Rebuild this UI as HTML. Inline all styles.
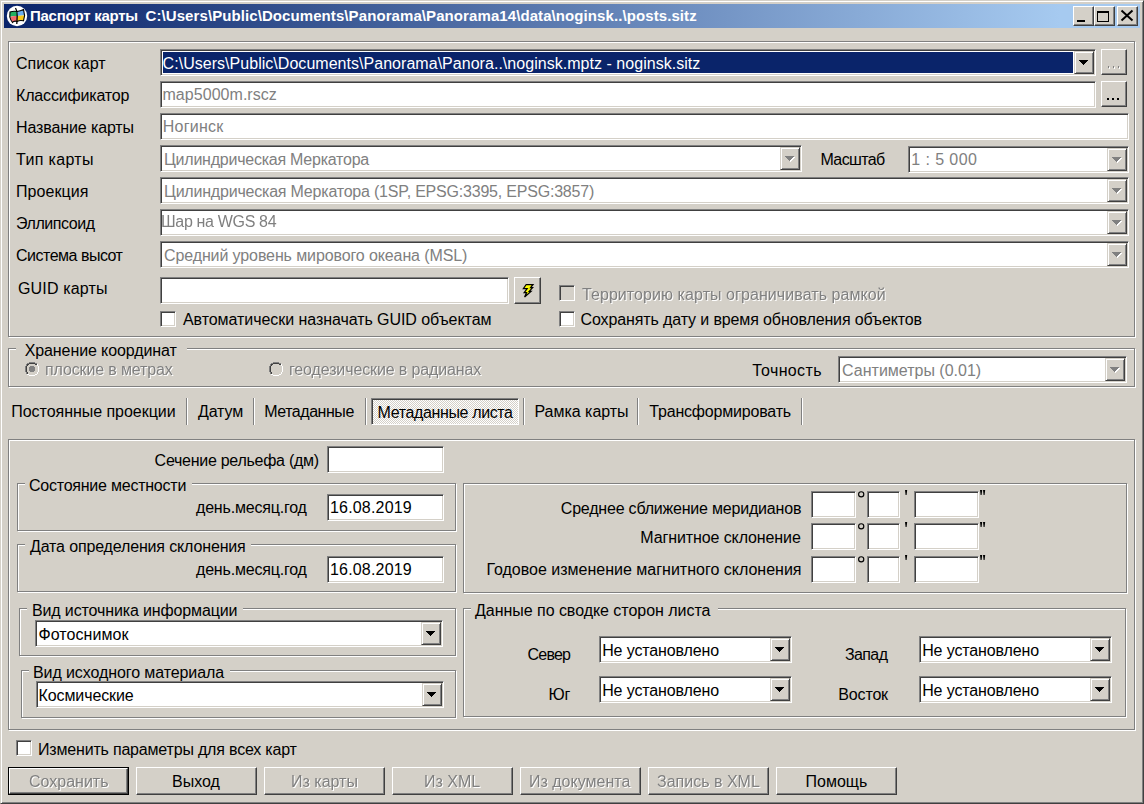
<!DOCTYPE html>
<html><head><meta charset="utf-8"><style>
html,body{margin:0;padding:0}
body{width:1144px;height:804px;background:#d4d0c8;position:relative;overflow:hidden;font-family:"Liberation Sans",sans-serif;font-size:16px;color:#000}
.a{position:absolute;box-sizing:border-box}
.t{position:absolute;white-space:pre;line-height:18px;font-size:16px}
.dis{color:#808080;text-shadow:1px 1px 0 #fff;will-change:transform}
.g{color:#808080}
.w{color:#fff}
.sk{position:absolute;box-sizing:border-box;background:#fff;border:1px solid;border-color:#808080 #fff #fff #808080;box-shadow:inset 1px 1px #404040,inset -1px -1px #d4d0c8}
.bt{position:absolute;box-sizing:border-box;background:#d4d0c8;border:1px solid;border-color:#fff #404040 #404040 #fff;box-shadow:inset -1px -1px #808080}
.dd{position:absolute;box-sizing:border-box;background:#d4d0c8;border:1px solid;border-color:#d4d0c8 #404040 #404040 #d4d0c8;box-shadow:inset 1px 1px #fff,inset -1px -1px #808080}
.gb{position:absolute;box-sizing:border-box;border:1px solid #808080;box-shadow:1px 1px 0 0 #fff,inset 1px 1px 0 0 #fff}
svg.a{overflow:visible}
</style></head><body>
<div class="a" style="left:0;top:0;width:1144px;height:804px;border:1px solid;border-color:#d4d0c8 #404040 #404040 #d4d0c8;box-shadow:inset 1px 1px #fff,inset -1px -1px #808080"></div>
<div class="a" style="left:4px;top:4px;width:1136px;height:24px;background:linear-gradient(to right,#0a246a 0,#a6caf0 1056px,#a6caf0 100%)"></div>
<svg class="a" style="left:6px;top:5px" width="22" height="22" viewBox="0 0 22 22">
<circle cx="11" cy="11" r="10.2" fill="#fff"/>
<path d="M4 7 Q7.5 5.8 11 6.5 L11 11 Q7 10.6 3.8 12 Z" fill="#22b060"/>
<path d="M11 6.5 Q14.5 6 17.5 4.5 L18.6 10.6 Q14.5 10.3 11 11 Z" fill="#6aaef0"/>
<path d="M3.8 12 Q7 10.6 11 11 L11 16.5 Q8 15.5 6.5 17.5 Z" fill="#f06a6a"/>
<path d="M11 11 Q14.5 10.3 18.6 10.6 L17.5 15.8 Q14 14.8 11 16.5 Z" fill="#f8c818"/>
<path d="M4 7 Q7.5 5.8 11 6.5 Q14.5 6 17.5 4.5 L18.6 10.6 L17.5 15.8 Q14 14.8 11 16.5 Q8 15.5 6.5 17.5 Q4.5 15 3.8 12 Z" fill="none" stroke="#000" stroke-width="1.1"/>
<path d="M9.5 3 Q11.5 6 11.2 11 Q11 16 10.8 19" fill="none" stroke="#000" stroke-width="1.3"/>
</svg>
<div class="bt" style="left:1073px;top:6px;width:21px;height:20px;"></div>
<div class="bt" style="left:1094px;top:6px;width:21px;height:20px;"></div>
<div class="bt" style="left:1117px;top:6px;width:21px;height:20px;"></div>
<div class="a" style="left:1077px;top:20px;width:8px;height:2px;background:#000"></div>
<div class="a" style="left:1097px;top:11px;width:12px;height:11px;border:1px solid #000;border-top-width:2px"></div>
<svg class="a" style="left:1117px;top:6px" width="21" height="20"><path d="M4.5 4.5 L15.5 14.5 M15.5 4.5 L4.5 14.5" stroke="#000" stroke-width="2" fill="none"/></svg>
<div class="gb" style="left:8px;top:41px;width:1127px;height:296px;"></div>
<div class="sk" style="left:160px;top:49px;width:936px;height:27px;background:#fff"></div>
<div class="dd" style="left:1074px;top:51px;width:20px;height:23px;"></div>
<svg class="a" style="left:1079px;top:60px" width="9" height="5" shape-rendering="crispEdges"><rect x="0" y="0" width="9" height="1" fill="#000"/><rect x="1" y="1" width="7" height="1" fill="#000"/><rect x="2" y="2" width="5" height="1" fill="#000"/><rect x="3" y="3" width="3" height="1" fill="#000"/><rect x="4" y="4" width="1" height="1" fill="#000"/></svg>
<div class="a" style="left:163px;top:52px;width:910px;height:21px;background:#0a246a"></div>
<div class="bt" style="left:1101px;top:49px;width:26px;height:26px;"></div>
<div class="a" style="left:1109px;top:67px;width:1px;height:2px;background:#fff"></div><div class="a" style="left:1108px;top:66px;width:1px;height:2px;background:#808080"></div>
<div class="a" style="left:1114px;top:67px;width:1px;height:2px;background:#fff"></div><div class="a" style="left:1113px;top:66px;width:1px;height:2px;background:#808080"></div>
<div class="a" style="left:1119px;top:67px;width:1px;height:2px;background:#fff"></div><div class="a" style="left:1118px;top:66px;width:1px;height:2px;background:#808080"></div>
<div class="sk" style="left:160px;top:81px;width:936px;height:27px;background:#fff"></div>
<div class="bt" style="left:1101px;top:81px;width:26px;height:26px;"></div>
<div class="a" style="left:1107px;top:98px;width:2px;height:2px;background:#000"></div>
<div class="a" style="left:1112px;top:98px;width:2px;height:2px;background:#000"></div>
<div class="a" style="left:1117px;top:98px;width:2px;height:2px;background:#000"></div>
<div class="sk" style="left:160px;top:113px;width:969px;height:27px;background:#fff"></div>
<div class="sk" style="left:160px;top:145px;width:642px;height:27px;background:#fff"></div>
<div class="dd" style="left:780px;top:147px;width:20px;height:23px;"></div>
<svg class="a" style="left:785px;top:156px" width="11" height="7" shape-rendering="crispEdges"><rect x="1" y="1" width="9" height="1" fill="#fff"/><rect x="2" y="2" width="7" height="1" fill="#fff"/><rect x="3" y="3" width="5" height="1" fill="#fff"/><rect x="4" y="4" width="3" height="1" fill="#fff"/><rect x="5" y="5" width="1" height="1" fill="#fff"/><rect x="0" y="0" width="9" height="1" fill="#808080"/><rect x="1" y="1" width="7" height="1" fill="#808080"/><rect x="2" y="2" width="5" height="1" fill="#808080"/><rect x="3" y="3" width="3" height="1" fill="#808080"/><rect x="4" y="4" width="1" height="1" fill="#808080"/></svg>
<div class="sk" style="left:908px;top:146px;width:221px;height:27px;background:#fff"></div>
<div class="dd" style="left:1107px;top:148px;width:20px;height:23px;"></div>
<svg class="a" style="left:1112px;top:157px" width="11" height="7" shape-rendering="crispEdges"><rect x="1" y="1" width="9" height="1" fill="#fff"/><rect x="2" y="2" width="7" height="1" fill="#fff"/><rect x="3" y="3" width="5" height="1" fill="#fff"/><rect x="4" y="4" width="3" height="1" fill="#fff"/><rect x="5" y="5" width="1" height="1" fill="#fff"/><rect x="0" y="0" width="9" height="1" fill="#808080"/><rect x="1" y="1" width="7" height="1" fill="#808080"/><rect x="2" y="2" width="5" height="1" fill="#808080"/><rect x="3" y="3" width="3" height="1" fill="#808080"/><rect x="4" y="4" width="1" height="1" fill="#808080"/></svg>
<div class="sk" style="left:160px;top:177px;width:969px;height:27px;background:#fff"></div>
<div class="dd" style="left:1107px;top:179px;width:20px;height:23px;"></div>
<svg class="a" style="left:1112px;top:188px" width="11" height="7" shape-rendering="crispEdges"><rect x="1" y="1" width="9" height="1" fill="#fff"/><rect x="2" y="2" width="7" height="1" fill="#fff"/><rect x="3" y="3" width="5" height="1" fill="#fff"/><rect x="4" y="4" width="3" height="1" fill="#fff"/><rect x="5" y="5" width="1" height="1" fill="#fff"/><rect x="0" y="0" width="9" height="1" fill="#808080"/><rect x="1" y="1" width="7" height="1" fill="#808080"/><rect x="2" y="2" width="5" height="1" fill="#808080"/><rect x="3" y="3" width="3" height="1" fill="#808080"/><rect x="4" y="4" width="1" height="1" fill="#808080"/></svg>
<div class="sk" style="left:160px;top:209px;width:969px;height:27px;background:#fff"></div>
<div class="dd" style="left:1107px;top:211px;width:20px;height:23px;"></div>
<svg class="a" style="left:1112px;top:220px" width="11" height="7" shape-rendering="crispEdges"><rect x="1" y="1" width="9" height="1" fill="#fff"/><rect x="2" y="2" width="7" height="1" fill="#fff"/><rect x="3" y="3" width="5" height="1" fill="#fff"/><rect x="4" y="4" width="3" height="1" fill="#fff"/><rect x="5" y="5" width="1" height="1" fill="#fff"/><rect x="0" y="0" width="9" height="1" fill="#808080"/><rect x="1" y="1" width="7" height="1" fill="#808080"/><rect x="2" y="2" width="5" height="1" fill="#808080"/><rect x="3" y="3" width="3" height="1" fill="#808080"/><rect x="4" y="4" width="1" height="1" fill="#808080"/></svg>
<div class="sk" style="left:160px;top:241px;width:969px;height:27px;background:#fff"></div>
<div class="dd" style="left:1107px;top:243px;width:20px;height:23px;"></div>
<svg class="a" style="left:1112px;top:252px" width="11" height="7" shape-rendering="crispEdges"><rect x="1" y="1" width="9" height="1" fill="#fff"/><rect x="2" y="2" width="7" height="1" fill="#fff"/><rect x="3" y="3" width="5" height="1" fill="#fff"/><rect x="4" y="4" width="3" height="1" fill="#fff"/><rect x="5" y="5" width="1" height="1" fill="#fff"/><rect x="0" y="0" width="9" height="1" fill="#808080"/><rect x="1" y="1" width="7" height="1" fill="#808080"/><rect x="2" y="2" width="5" height="1" fill="#808080"/><rect x="3" y="3" width="3" height="1" fill="#808080"/><rect x="4" y="4" width="1" height="1" fill="#808080"/></svg>
<div class="sk" style="left:160px;top:277px;width:349px;height:27px;background:#fff"></div>
<div class="bt" style="left:514px;top:277px;width:27px;height:27px;"></div>
<svg class="a" style="left:520px;top:282px" width="16" height="16" viewBox="0 0 16 16">
<path d="M6.2 2.5 L13 2.5 L10.6 5.6 L12.6 5.6 L9.2 9.4 L11 9.4 L4.6 15 L6.6 10.6 L4.2 10.6 L7.2 6.6 L3.4 6.6 Z" fill="#ffff00" stroke="#000" stroke-width="1.25" stroke-linejoin="miter"/>
</svg>
<div class="sk" style="left:559px;top:285px;width:16px;height:16px;background:#d4d0c8"></div>
<div class="sk" style="left:160px;top:311px;width:16px;height:16px;background:#fff"></div>
<div class="sk" style="left:559px;top:311px;width:16px;height:16px;background:#fff"></div>
<div class="gb" style="left:8px;top:348px;width:1127px;height:39px;"></div>
<div class="a" style="left:16px;top:345px;width:171px;height:6px;background:#d4d0c8"></div>
<svg class="a" style="left:25px;top:362px" width="14" height="14" shape-rendering="crispEdges"><rect x="4" y="2" width="6" height="1" fill="#d4d0c8"/><rect x="3" y="3" width="8" height="1" fill="#d4d0c8"/><rect x="2" y="4" width="10" height="1" fill="#d4d0c8"/><rect x="2" y="5" width="10" height="1" fill="#d4d0c8"/><rect x="2" y="6" width="10" height="1" fill="#d4d0c8"/><rect x="2" y="7" width="10" height="1" fill="#d4d0c8"/><rect x="2" y="8" width="10" height="1" fill="#d4d0c8"/><rect x="2" y="9" width="10" height="1" fill="#d4d0c8"/><rect x="3" y="10" width="8" height="1" fill="#d4d0c8"/><rect x="4" y="11" width="6" height="1" fill="#d4d0c8"/><rect x="4" y="0" width="1" height="1" fill="#808080"/><rect x="5" y="0" width="1" height="1" fill="#808080"/><rect x="6" y="0" width="1" height="1" fill="#808080"/><rect x="7" y="0" width="1" height="1" fill="#808080"/><rect x="8" y="0" width="1" height="1" fill="#808080"/><rect x="9" y="0" width="1" height="1" fill="#808080"/><rect x="2" y="1" width="1" height="1" fill="#808080"/><rect x="3" y="1" width="1" height="1" fill="#808080"/><rect x="10" y="1" width="1" height="1" fill="#808080"/><rect x="11" y="1" width="1" height="1" fill="#808080"/><rect x="1" y="2" width="1" height="1" fill="#808080"/><rect x="12" y="2" width="1" height="1" fill="#fff"/><rect x="1" y="3" width="1" height="1" fill="#808080"/><rect x="12" y="3" width="1" height="1" fill="#fff"/><rect x="0" y="4" width="1" height="1" fill="#808080"/><rect x="13" y="4" width="1" height="1" fill="#fff"/><rect x="0" y="5" width="1" height="1" fill="#808080"/><rect x="13" y="5" width="1" height="1" fill="#fff"/><rect x="0" y="6" width="1" height="1" fill="#808080"/><rect x="13" y="6" width="1" height="1" fill="#fff"/><rect x="0" y="7" width="1" height="1" fill="#808080"/><rect x="13" y="7" width="1" height="1" fill="#fff"/><rect x="0" y="8" width="1" height="1" fill="#808080"/><rect x="13" y="8" width="1" height="1" fill="#fff"/><rect x="0" y="9" width="1" height="1" fill="#808080"/><rect x="13" y="9" width="1" height="1" fill="#fff"/><rect x="1" y="10" width="1" height="1" fill="#808080"/><rect x="12" y="10" width="1" height="1" fill="#fff"/><rect x="1" y="11" width="1" height="1" fill="#808080"/><rect x="12" y="11" width="1" height="1" fill="#fff"/><rect x="2" y="12" width="1" height="1" fill="#fff"/><rect x="3" y="12" width="1" height="1" fill="#fff"/><rect x="10" y="12" width="1" height="1" fill="#fff"/><rect x="11" y="12" width="1" height="1" fill="#fff"/><rect x="4" y="13" width="1" height="1" fill="#fff"/><rect x="5" y="13" width="1" height="1" fill="#fff"/><rect x="6" y="13" width="1" height="1" fill="#fff"/><rect x="7" y="13" width="1" height="1" fill="#fff"/><rect x="8" y="13" width="1" height="1" fill="#fff"/><rect x="9" y="13" width="1" height="1" fill="#fff"/><rect x="4" y="1" width="1" height="1" fill="#404040"/><rect x="5" y="1" width="1" height="1" fill="#404040"/><rect x="6" y="1" width="1" height="1" fill="#404040"/><rect x="7" y="1" width="1" height="1" fill="#404040"/><rect x="8" y="1" width="1" height="1" fill="#404040"/><rect x="9" y="1" width="1" height="1" fill="#404040"/><rect x="2" y="2" width="1" height="1" fill="#404040"/><rect x="3" y="2" width="1" height="1" fill="#404040"/><rect x="10" y="2" width="1" height="1" fill="#404040"/><rect x="11" y="2" width="1" height="1" fill="#404040"/><rect x="2" y="3" width="1" height="1" fill="#404040"/><rect x="11" y="3" width="1" height="1" fill="#d4d0c8"/><rect x="1" y="4" width="1" height="1" fill="#404040"/><rect x="12" y="4" width="1" height="1" fill="#d4d0c8"/><rect x="1" y="5" width="1" height="1" fill="#404040"/><rect x="12" y="5" width="1" height="1" fill="#d4d0c8"/><rect x="1" y="6" width="1" height="1" fill="#404040"/><rect x="12" y="6" width="1" height="1" fill="#d4d0c8"/><rect x="1" y="7" width="1" height="1" fill="#404040"/><rect x="12" y="7" width="1" height="1" fill="#d4d0c8"/><rect x="1" y="8" width="1" height="1" fill="#404040"/><rect x="12" y="8" width="1" height="1" fill="#d4d0c8"/><rect x="1" y="9" width="1" height="1" fill="#404040"/><rect x="12" y="9" width="1" height="1" fill="#d4d0c8"/><rect x="2" y="10" width="1" height="1" fill="#404040"/><rect x="11" y="10" width="1" height="1" fill="#d4d0c8"/><rect x="2" y="11" width="1" height="1" fill="#404040"/><rect x="3" y="11" width="1" height="1" fill="#d4d0c8"/><rect x="10" y="11" width="1" height="1" fill="#d4d0c8"/><rect x="11" y="11" width="1" height="1" fill="#d4d0c8"/><rect x="4" y="12" width="1" height="1" fill="#d4d0c8"/><rect x="5" y="12" width="1" height="1" fill="#d4d0c8"/><rect x="6" y="12" width="1" height="1" fill="#d4d0c8"/><rect x="7" y="12" width="1" height="1" fill="#d4d0c8"/><rect x="8" y="12" width="1" height="1" fill="#d4d0c8"/><rect x="9" y="12" width="1" height="1" fill="#d4d0c8"/><rect x="5" y="4" width="4" height="6" fill="#808080"/><rect x="4" y="5" width="6" height="4" fill="#808080"/></svg>
<svg class="a" style="left:269px;top:362px" width="14" height="14" shape-rendering="crispEdges"><rect x="4" y="2" width="6" height="1" fill="#d4d0c8"/><rect x="3" y="3" width="8" height="1" fill="#d4d0c8"/><rect x="2" y="4" width="10" height="1" fill="#d4d0c8"/><rect x="2" y="5" width="10" height="1" fill="#d4d0c8"/><rect x="2" y="6" width="10" height="1" fill="#d4d0c8"/><rect x="2" y="7" width="10" height="1" fill="#d4d0c8"/><rect x="2" y="8" width="10" height="1" fill="#d4d0c8"/><rect x="2" y="9" width="10" height="1" fill="#d4d0c8"/><rect x="3" y="10" width="8" height="1" fill="#d4d0c8"/><rect x="4" y="11" width="6" height="1" fill="#d4d0c8"/><rect x="4" y="0" width="1" height="1" fill="#808080"/><rect x="5" y="0" width="1" height="1" fill="#808080"/><rect x="6" y="0" width="1" height="1" fill="#808080"/><rect x="7" y="0" width="1" height="1" fill="#808080"/><rect x="8" y="0" width="1" height="1" fill="#808080"/><rect x="9" y="0" width="1" height="1" fill="#808080"/><rect x="2" y="1" width="1" height="1" fill="#808080"/><rect x="3" y="1" width="1" height="1" fill="#808080"/><rect x="10" y="1" width="1" height="1" fill="#808080"/><rect x="11" y="1" width="1" height="1" fill="#808080"/><rect x="1" y="2" width="1" height="1" fill="#808080"/><rect x="12" y="2" width="1" height="1" fill="#fff"/><rect x="1" y="3" width="1" height="1" fill="#808080"/><rect x="12" y="3" width="1" height="1" fill="#fff"/><rect x="0" y="4" width="1" height="1" fill="#808080"/><rect x="13" y="4" width="1" height="1" fill="#fff"/><rect x="0" y="5" width="1" height="1" fill="#808080"/><rect x="13" y="5" width="1" height="1" fill="#fff"/><rect x="0" y="6" width="1" height="1" fill="#808080"/><rect x="13" y="6" width="1" height="1" fill="#fff"/><rect x="0" y="7" width="1" height="1" fill="#808080"/><rect x="13" y="7" width="1" height="1" fill="#fff"/><rect x="0" y="8" width="1" height="1" fill="#808080"/><rect x="13" y="8" width="1" height="1" fill="#fff"/><rect x="0" y="9" width="1" height="1" fill="#808080"/><rect x="13" y="9" width="1" height="1" fill="#fff"/><rect x="1" y="10" width="1" height="1" fill="#808080"/><rect x="12" y="10" width="1" height="1" fill="#fff"/><rect x="1" y="11" width="1" height="1" fill="#808080"/><rect x="12" y="11" width="1" height="1" fill="#fff"/><rect x="2" y="12" width="1" height="1" fill="#fff"/><rect x="3" y="12" width="1" height="1" fill="#fff"/><rect x="10" y="12" width="1" height="1" fill="#fff"/><rect x="11" y="12" width="1" height="1" fill="#fff"/><rect x="4" y="13" width="1" height="1" fill="#fff"/><rect x="5" y="13" width="1" height="1" fill="#fff"/><rect x="6" y="13" width="1" height="1" fill="#fff"/><rect x="7" y="13" width="1" height="1" fill="#fff"/><rect x="8" y="13" width="1" height="1" fill="#fff"/><rect x="9" y="13" width="1" height="1" fill="#fff"/><rect x="4" y="1" width="1" height="1" fill="#404040"/><rect x="5" y="1" width="1" height="1" fill="#404040"/><rect x="6" y="1" width="1" height="1" fill="#404040"/><rect x="7" y="1" width="1" height="1" fill="#404040"/><rect x="8" y="1" width="1" height="1" fill="#404040"/><rect x="9" y="1" width="1" height="1" fill="#404040"/><rect x="2" y="2" width="1" height="1" fill="#404040"/><rect x="3" y="2" width="1" height="1" fill="#404040"/><rect x="10" y="2" width="1" height="1" fill="#404040"/><rect x="11" y="2" width="1" height="1" fill="#404040"/><rect x="2" y="3" width="1" height="1" fill="#404040"/><rect x="11" y="3" width="1" height="1" fill="#d4d0c8"/><rect x="1" y="4" width="1" height="1" fill="#404040"/><rect x="12" y="4" width="1" height="1" fill="#d4d0c8"/><rect x="1" y="5" width="1" height="1" fill="#404040"/><rect x="12" y="5" width="1" height="1" fill="#d4d0c8"/><rect x="1" y="6" width="1" height="1" fill="#404040"/><rect x="12" y="6" width="1" height="1" fill="#d4d0c8"/><rect x="1" y="7" width="1" height="1" fill="#404040"/><rect x="12" y="7" width="1" height="1" fill="#d4d0c8"/><rect x="1" y="8" width="1" height="1" fill="#404040"/><rect x="12" y="8" width="1" height="1" fill="#d4d0c8"/><rect x="1" y="9" width="1" height="1" fill="#404040"/><rect x="12" y="9" width="1" height="1" fill="#d4d0c8"/><rect x="2" y="10" width="1" height="1" fill="#404040"/><rect x="11" y="10" width="1" height="1" fill="#d4d0c8"/><rect x="2" y="11" width="1" height="1" fill="#404040"/><rect x="3" y="11" width="1" height="1" fill="#d4d0c8"/><rect x="10" y="11" width="1" height="1" fill="#d4d0c8"/><rect x="11" y="11" width="1" height="1" fill="#d4d0c8"/><rect x="4" y="12" width="1" height="1" fill="#d4d0c8"/><rect x="5" y="12" width="1" height="1" fill="#d4d0c8"/><rect x="6" y="12" width="1" height="1" fill="#d4d0c8"/><rect x="7" y="12" width="1" height="1" fill="#d4d0c8"/><rect x="8" y="12" width="1" height="1" fill="#d4d0c8"/><rect x="9" y="12" width="1" height="1" fill="#d4d0c8"/></svg>
<div class="sk" style="left:838px;top:356px;width:289px;height:27px;background:#fff"></div>
<div class="dd" style="left:1105px;top:358px;width:20px;height:23px;"></div>
<svg class="a" style="left:1110px;top:367px" width="11" height="7" shape-rendering="crispEdges"><rect x="1" y="1" width="9" height="1" fill="#fff"/><rect x="2" y="2" width="7" height="1" fill="#fff"/><rect x="3" y="3" width="5" height="1" fill="#fff"/><rect x="4" y="4" width="3" height="1" fill="#fff"/><rect x="5" y="5" width="1" height="1" fill="#fff"/><rect x="0" y="0" width="9" height="1" fill="#808080"/><rect x="1" y="1" width="7" height="1" fill="#808080"/><rect x="2" y="2" width="5" height="1" fill="#808080"/><rect x="3" y="3" width="3" height="1" fill="#808080"/><rect x="4" y="4" width="1" height="1" fill="#808080"/></svg>
<div class="a" style="left:186px;top:398px;width:2px;height:27px;border-left:1px solid #808080;border-right:1px solid #fff"></div>
<div class="a" style="left:253px;top:398px;width:2px;height:27px;border-left:1px solid #808080;border-right:1px solid #fff"></div>
<div class="a" style="left:365px;top:398px;width:2px;height:27px;border-left:1px solid #808080;border-right:1px solid #fff"></div>
<div class="a" style="left:371px;top:398px;width:148px;height:27px;border:1px solid;border-color:#808080 #fff #fff #808080;box-shadow:inset 1px 1px #404040;background-color:#fff;background-image:conic-gradient(#d4d0c8 25%,#fff 0 50%,#d4d0c8 0 75%,#fff 0);background-size:2px 2px"></div>
<div class="a" style="left:523px;top:398px;width:2px;height:27px;border-left:1px solid #808080;border-right:1px solid #fff"></div>
<div class="a" style="left:637px;top:398px;width:2px;height:27px;border-left:1px solid #808080;border-right:1px solid #fff"></div>
<div class="a" style="left:801px;top:398px;width:2px;height:27px;border-left:1px solid #808080;border-right:1px solid #fff"></div>
<div class="gb" style="left:8px;top:439px;width:1127px;height:291px;"></div>
<div class="sk" style="left:327px;top:446px;width:117px;height:27px;background:#fff"></div>
<div class="gb" style="left:17px;top:483px;width:439px;height:48px;"></div>
<div class="a" style="left:25px;top:480px;width:167px;height:6px;background:#d4d0c8"></div>
<div class="sk" style="left:327px;top:494px;width:117px;height:27px;background:#fff"></div>
<div class="gb" style="left:17px;top:544px;width:439px;height:48px;"></div>
<div class="a" style="left:25px;top:541px;width:226px;height:6px;background:#d4d0c8"></div>
<div class="sk" style="left:327px;top:556px;width:117px;height:27px;background:#fff"></div>
<div class="gb" style="left:463px;top:483px;width:664px;height:110px;"></div>
<div class="sk" style="left:811px;top:491px;width:45px;height:27px;background:#fff"></div>
<div class="sk" style="left:867px;top:491px;width:33px;height:27px;background:#fff"></div>
<div class="sk" style="left:914px;top:491px;width:65px;height:27px;background:#fff"></div>
<svg class="a" style="left:857px;top:490px" width="8" height="8"><circle cx="4.2" cy="4.3" r="2.6" fill="none" stroke="#000" stroke-width="1.15"/></svg>
<svg class="a" style="left:905px;top:490px" width="3" height="6"><path d="M0 0 L2.2 0 L1.6 5 L0.6 5 Z" fill="#000"/></svg>
<svg class="a" style="left:980px;top:490px" width="3" height="6"><path d="M0 0 L2.2 0 L1.6 5 L0.6 5 Z" fill="#000"/></svg>
<svg class="a" style="left:983px;top:490px" width="3" height="6"><path d="M0 0 L2.2 0 L1.6 5 L0.6 5 Z" fill="#000"/></svg>
<div class="sk" style="left:811px;top:523px;width:45px;height:27px;background:#fff"></div>
<div class="sk" style="left:867px;top:523px;width:33px;height:27px;background:#fff"></div>
<div class="sk" style="left:914px;top:523px;width:65px;height:27px;background:#fff"></div>
<svg class="a" style="left:857px;top:522px" width="8" height="8"><circle cx="4.2" cy="4.3" r="2.6" fill="none" stroke="#000" stroke-width="1.15"/></svg>
<svg class="a" style="left:905px;top:522px" width="3" height="6"><path d="M0 0 L2.2 0 L1.6 5 L0.6 5 Z" fill="#000"/></svg>
<svg class="a" style="left:980px;top:522px" width="3" height="6"><path d="M0 0 L2.2 0 L1.6 5 L0.6 5 Z" fill="#000"/></svg>
<svg class="a" style="left:983px;top:522px" width="3" height="6"><path d="M0 0 L2.2 0 L1.6 5 L0.6 5 Z" fill="#000"/></svg>
<div class="sk" style="left:811px;top:556px;width:45px;height:27px;background:#fff"></div>
<div class="sk" style="left:867px;top:556px;width:33px;height:27px;background:#fff"></div>
<div class="sk" style="left:914px;top:556px;width:65px;height:27px;background:#fff"></div>
<svg class="a" style="left:857px;top:555px" width="8" height="8"><circle cx="4.2" cy="4.3" r="2.6" fill="none" stroke="#000" stroke-width="1.15"/></svg>
<svg class="a" style="left:905px;top:555px" width="3" height="6"><path d="M0 0 L2.2 0 L1.6 5 L0.6 5 Z" fill="#000"/></svg>
<svg class="a" style="left:980px;top:555px" width="3" height="6"><path d="M0 0 L2.2 0 L1.6 5 L0.6 5 Z" fill="#000"/></svg>
<svg class="a" style="left:983px;top:555px" width="3" height="6"><path d="M0 0 L2.2 0 L1.6 5 L0.6 5 Z" fill="#000"/></svg>
<div class="gb" style="left:19px;top:608px;width:437px;height:48px;"></div>
<div class="a" style="left:27px;top:605px;width:216px;height:6px;background:#d4d0c8"></div>
<div class="sk" style="left:35px;top:620px;width:408px;height:27px;background:#fff"></div>
<div class="dd" style="left:421px;top:622px;width:20px;height:23px;"></div>
<svg class="a" style="left:426px;top:631px" width="9" height="5" shape-rendering="crispEdges"><rect x="0" y="0" width="9" height="1" fill="#000"/><rect x="1" y="1" width="7" height="1" fill="#000"/><rect x="2" y="2" width="5" height="1" fill="#000"/><rect x="3" y="3" width="3" height="1" fill="#000"/><rect x="4" y="4" width="1" height="1" fill="#000"/></svg>
<div class="gb" style="left:21px;top:670px;width:435px;height:48px;"></div>
<div class="a" style="left:29px;top:667px;width:201px;height:6px;background:#d4d0c8"></div>
<div class="sk" style="left:36px;top:681px;width:408px;height:27px;background:#fff"></div>
<div class="dd" style="left:422px;top:683px;width:20px;height:23px;"></div>
<svg class="a" style="left:427px;top:692px" width="9" height="5" shape-rendering="crispEdges"><rect x="0" y="0" width="9" height="1" fill="#000"/><rect x="1" y="1" width="7" height="1" fill="#000"/><rect x="2" y="2" width="5" height="1" fill="#000"/><rect x="3" y="3" width="3" height="1" fill="#000"/><rect x="4" y="4" width="1" height="1" fill="#000"/></svg>
<div class="gb" style="left:463px;top:608px;width:663px;height:109px;"></div>
<div class="a" style="left:471px;top:605px;width:247px;height:6px;background:#d4d0c8"></div>
<div class="sk" style="left:599px;top:636px;width:193px;height:27px;background:#fff"></div>
<div class="dd" style="left:770px;top:638px;width:20px;height:23px;"></div>
<svg class="a" style="left:775px;top:647px" width="9" height="5" shape-rendering="crispEdges"><rect x="0" y="0" width="9" height="1" fill="#000"/><rect x="1" y="1" width="7" height="1" fill="#000"/><rect x="2" y="2" width="5" height="1" fill="#000"/><rect x="3" y="3" width="3" height="1" fill="#000"/><rect x="4" y="4" width="1" height="1" fill="#000"/></svg>
<div class="sk" style="left:599px;top:676px;width:193px;height:27px;background:#fff"></div>
<div class="dd" style="left:770px;top:678px;width:20px;height:23px;"></div>
<svg class="a" style="left:775px;top:687px" width="9" height="5" shape-rendering="crispEdges"><rect x="0" y="0" width="9" height="1" fill="#000"/><rect x="1" y="1" width="7" height="1" fill="#000"/><rect x="2" y="2" width="5" height="1" fill="#000"/><rect x="3" y="3" width="3" height="1" fill="#000"/><rect x="4" y="4" width="1" height="1" fill="#000"/></svg>
<div class="sk" style="left:919px;top:636px;width:193px;height:27px;background:#fff"></div>
<div class="dd" style="left:1090px;top:638px;width:20px;height:23px;"></div>
<svg class="a" style="left:1095px;top:647px" width="9" height="5" shape-rendering="crispEdges"><rect x="0" y="0" width="9" height="1" fill="#000"/><rect x="1" y="1" width="7" height="1" fill="#000"/><rect x="2" y="2" width="5" height="1" fill="#000"/><rect x="3" y="3" width="3" height="1" fill="#000"/><rect x="4" y="4" width="1" height="1" fill="#000"/></svg>
<div class="sk" style="left:919px;top:676px;width:193px;height:27px;background:#fff"></div>
<div class="dd" style="left:1090px;top:678px;width:20px;height:23px;"></div>
<svg class="a" style="left:1095px;top:687px" width="9" height="5" shape-rendering="crispEdges"><rect x="0" y="0" width="9" height="1" fill="#000"/><rect x="1" y="1" width="7" height="1" fill="#000"/><rect x="2" y="2" width="5" height="1" fill="#000"/><rect x="3" y="3" width="3" height="1" fill="#000"/><rect x="4" y="4" width="1" height="1" fill="#000"/></svg>
<div class="sk" style="left:16px;top:740px;width:16px;height:16px;background:#fff"></div>
<div class="a" style="left:8px;top:767px;width:121px;height:28px;border:1px solid #000"></div>
<div class="bt" style="left:9px;top:768px;width:119px;height:26px;"></div>
<div class="bt" style="left:136px;top:767px;width:121px;height:28px;"></div>
<div class="bt" style="left:264px;top:767px;width:121px;height:28px;"></div>
<div class="bt" style="left:392px;top:767px;width:121px;height:28px;"></div>
<div class="bt" style="left:520px;top:767px;width:121px;height:28px;"></div>
<div class="bt" style="left:648px;top:767px;width:121px;height:28px;"></div>
<div class="bt" style="left:776px;top:767px;width:121px;height:28px;"></div>
<div class="t w" style="left:30.00px;top:7px;font-weight:bold;font-size:15px;letter-spacing:-0.25px;">Паспорт карты</div>
<div class="t w" style="left:145.50px;top:7px;font-weight:bold;font-size:15px;letter-spacing:0.086px;">C:\Users\Public\Documents\Panorama\Panorama14\data\noginsk..\posts.sitz</div>
<div class="t" style="left:16.00px;top:55px;letter-spacing:-0.03px;">Список карт</div>
<div class="t" style="left:16.00px;top:87px;letter-spacing:-0.167px;">Классификатор</div>
<div class="t" style="left:16.00px;top:119px;letter-spacing:-0.115px;">Название карты</div>
<div class="t" style="left:16.00px;top:151px;letter-spacing:0.35px;">Тип карты</div>
<div class="t" style="left:16.00px;top:183px;letter-spacing:0.071px;">Проекция</div>
<div class="t" style="left:16.00px;top:215px;letter-spacing:-0.438px;">Эллипсоид</div>
<div class="t" style="left:16.00px;top:247px;letter-spacing:-0.5px;">Система высот</div>
<div class="t" style="left:18.00px;top:280px;letter-spacing:0.167px;">GUID карты</div>
<div class="t w" style="left:162.60px;top:55px;letter-spacing:0.034px;">C:\Users\Public\Documents\Panorama\Panora..\noginsk.mptz - noginsk.sitz</div>
<div class="t g" style="left:162.50px;top:86px;letter-spacing:0.042px;">map5000m.rscz</div>
<div class="t g" style="left:162.80px;top:118px;letter-spacing:0.25px;">Ногинск</div>
<div class="t g" style="left:164.00px;top:151px;letter-spacing:-0.239px;">Цилиндрическая Меркатора</div>
<div class="t" style="left:820.50px;top:151px;letter-spacing:-0.633px;">Масштаб</div>
<div class="t g" style="left:911.30px;top:151px;letter-spacing:0.412px;">1 : 5 000</div>
<div class="t g" style="left:164.00px;top:183px;letter-spacing:-0.206px;">Цилиндрическая Меркатора (1SP, EPSG:3395, EPSG:3857)</div>
<div class="t g" style="left:161.30px;top:213px;letter-spacing:-0.333px;will-change:transform;">Шар на WGS 84</div>
<div class="t g" style="left:164.00px;top:247px;letter-spacing:-0.111px;">Средний уровень мирового океана (MSL)</div>
<div class="t dis" style="left:581.60px;top:286px;letter-spacing:0.071px;">Территорию карты ограничивать рамкой</div>
<div class="t" style="left:183.00px;top:311px;letter-spacing:-0.061px;">Автоматически назначать GUID объектам</div>
<div class="t" style="left:580.60px;top:311px;letter-spacing:-0.122px;">Сохранять дату и время обновления объектов</div>
<div class="t" style="left:24.70px;top:342px;letter-spacing:-0.1px;">Хранение координат</div>
<div class="t dis" style="left:45.00px;top:361px;letter-spacing:-0.133px;">плоские в метрах</div>
<div class="t dis" style="left:288.50px;top:361px;letter-spacing:-0.13px;">геодезические в радианах</div>
<div class="t" style="left:752.20px;top:362px;letter-spacing:0.357px;">Точность</div>
<div class="t g" style="left:842.10px;top:362px;">Сантиметры (0.01)</div>
<div class="t" style="left:11.30px;top:403px;letter-spacing:-0.039px;">Постоянные проекции</div>
<div class="t" style="left:197.90px;top:403px;letter-spacing:-0.075px;">Датум</div>
<div class="t" style="left:264.20px;top:403px;letter-spacing:-0.456px;">Метаданные</div>
<div class="t" style="left:377.60px;top:404px;letter-spacing:-0.373px;">Метаданные листа</div>
<div class="t" style="left:534.50px;top:403px;letter-spacing:-0.03px;">Рамка карты</div>
<div class="t" style="left:649.30px;top:403px;letter-spacing:-0.193px;">Трансформировать</div>
<div class="t" style="left:154.60px;top:452px;letter-spacing:-0.268px;">Сечение рельефа (дм)</div>
<div class="t" style="left:29.00px;top:477px;letter-spacing:-0.233px;">Состояние местности</div>
<div class="t" style="left:196.00px;top:499px;letter-spacing:-0.192px;">день.месяц.год</div>
<div class="t" style="left:330.00px;top:499px;letter-spacing:0.178px;">16.08.2019</div>
<div class="t" style="left:30.00px;top:538px;letter-spacing:-0.148px;">Дата определения склонения</div>
<div class="t" style="left:196.00px;top:561px;letter-spacing:-0.192px;">день.месяц.год</div>
<div class="t" style="left:330.00px;top:561px;letter-spacing:0.178px;">16.08.2019</div>
<div class="t" style="left:560.80px;top:500px;letter-spacing:-0.2px;">Среднее сближение меридианов</div>
<div class="t" style="left:640.30px;top:529px;letter-spacing:-0.106px;">Магнитное склонение</div>
<div class="t" style="left:486.40px;top:561px;">Годовое изменение магнитного склонения</div>
<div class="t" style="left:32.00px;top:602px;letter-spacing:-0.13px;">Вид источника информации</div>
<div class="t" style="left:38.50px;top:626px;letter-spacing:0.056px;">Фотоснимок</div>
<div class="t" style="left:33.00px;top:664px;letter-spacing:-0.091px;">Вид исходного материала</div>
<div class="t" style="left:38.50px;top:687px;letter-spacing:-0.1px;">Космические</div>
<div class="t" style="left:475.00px;top:602px;letter-spacing:-0.036px;">Данные по сводке сторон листа</div>
<div class="t" style="left:527.50px;top:646px;letter-spacing:-0.775px;">Север</div>
<div class="t" style="left:548.50px;top:686px;letter-spacing:-0.1px;">Юг</div>
<div class="t" style="left:845.00px;top:646px;letter-spacing:-0.625px;">Запад</div>
<div class="t" style="left:838.30px;top:686px;letter-spacing:-0.16px;">Восток</div>
<div class="t" style="left:602.20px;top:642px;letter-spacing:-0.123px;">Не установлено</div>
<div class="t" style="left:602.20px;top:682px;letter-spacing:-0.123px;">Не установлено</div>
<div class="t" style="left:922.20px;top:642px;letter-spacing:-0.123px;">Не установлено</div>
<div class="t" style="left:922.20px;top:682px;letter-spacing:-0.123px;">Не установлено</div>
<div class="t" style="left:38.00px;top:741px;letter-spacing:-0.187px;">Изменить параметры для всех карт</div>
<div class="t dis" style="left:28.50px;top:773px;">Сохранить</div>
<div class="t" style="left:172.00px;top:773px;">Выход</div>
<div class="t dis" style="left:291.00px;top:773px;">Из карты</div>
<div class="t dis" style="left:424.00px;top:773px;">Из XML</div>
<div class="t dis" style="left:529.00px;top:773px;">Из документа</div>
<div class="t dis" style="left:656.50px;top:773px;">Запись в XML</div>
<div class="t" style="left:805.50px;top:773px;">Помощь</div>
</body></html>
